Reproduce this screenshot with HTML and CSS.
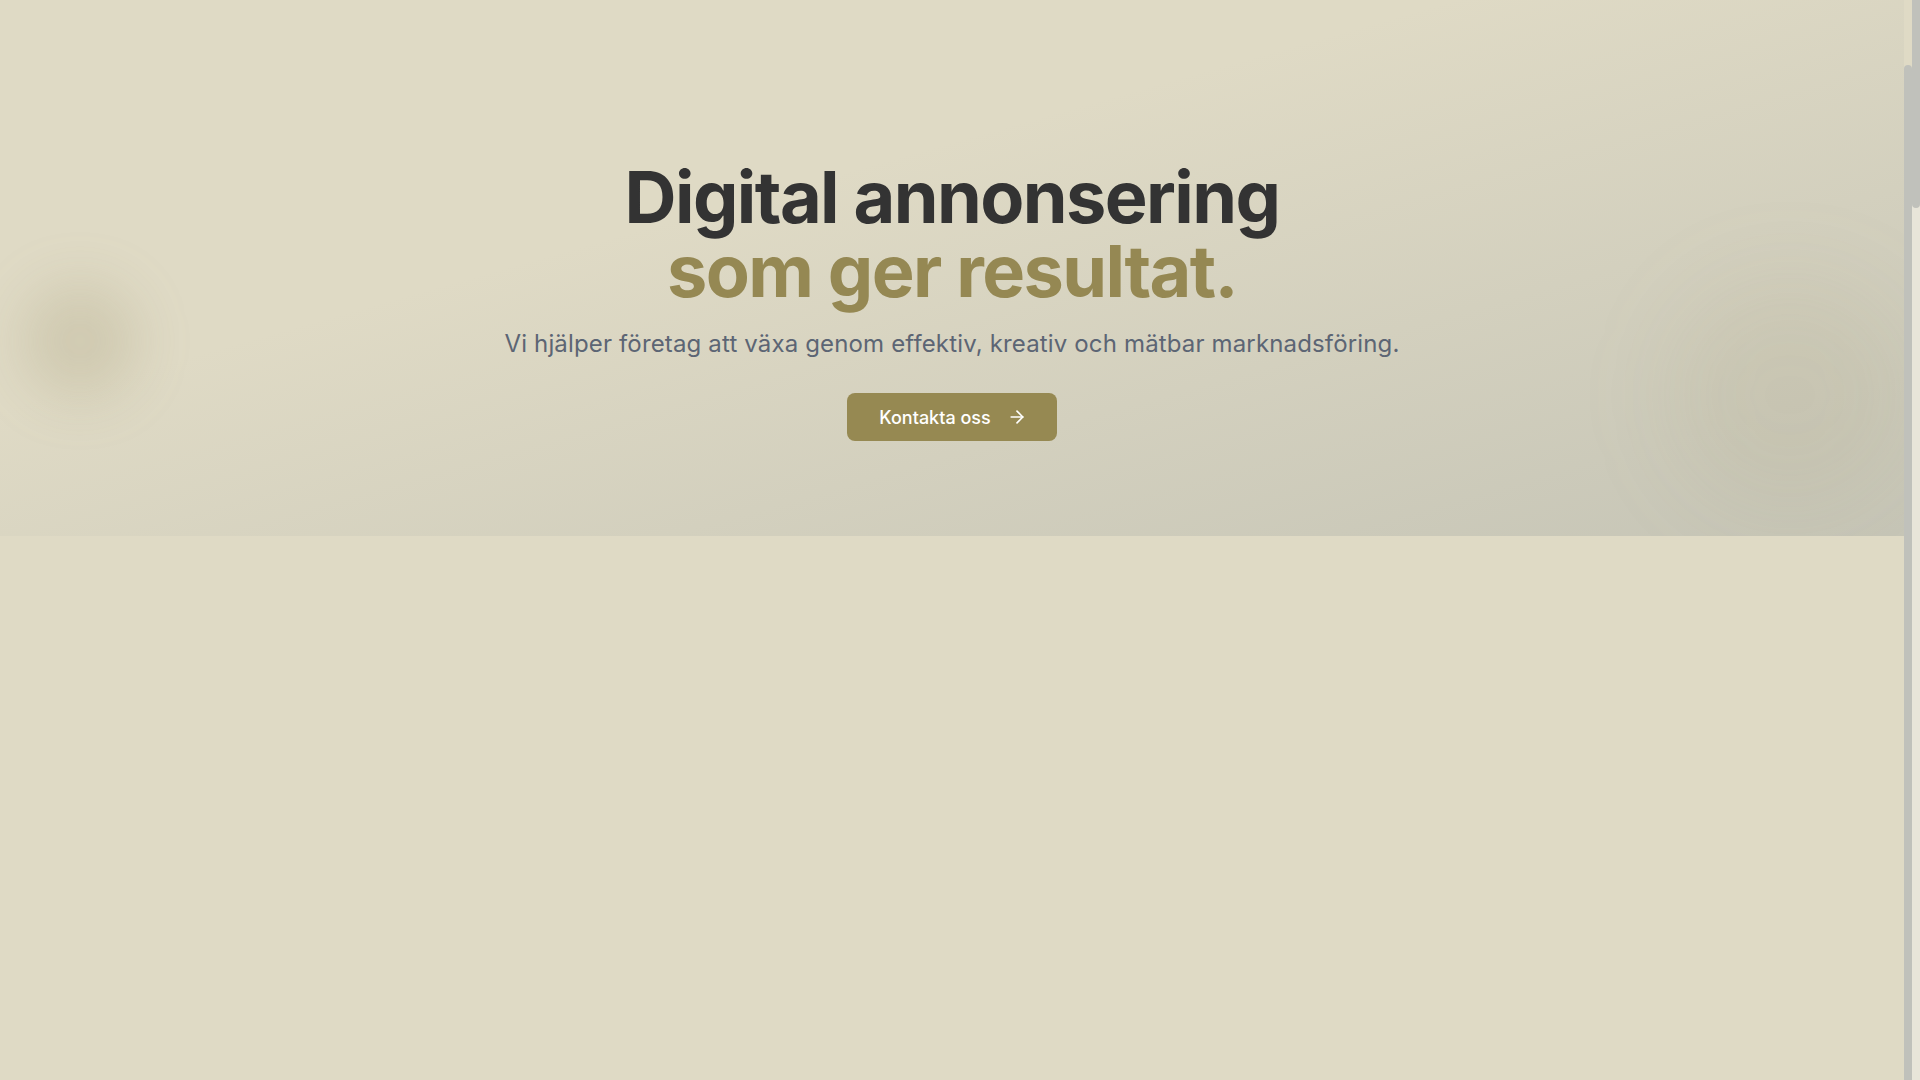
FILE: index.html
```html
<!DOCTYPE html>
<html lang="sv">
<head>
<meta charset="utf-8">
<title>Digital annonsering</title>
<link rel="stylesheet" href="styles.css">
</head>
<body>
  <div class="app">
    <section class="hero">
      <div class="blob blob-left"></div>
      <div class="blob blob-right"></div>
      <div class="hero-content">
        <h1 class="hero-title">
          <span class="hero-line">Digital annonsering</span>
          <span class="hero-line hero-accent">som ger resultat.</span>
        </h1>
        <p class="hero-lead">Vi hjälper företag att växa genom effektiv, kreativ och mätbar marknadsföring.</p>
        <a class="btn" href="#kontakt">
          <span>Kontakta oss</span>
          <svg class="btn-icon" viewBox="0 0 24 24" width="20" height="20" fill="none" stroke="currentColor" stroke-width="2" stroke-linecap="round" stroke-linejoin="round"><path d="M5 12h14"/><path d="m12 5 7 7-7 7"/></svg>
        </a>
      </div>
    </section>
    <main class="content"></main>
  </div>
  <div class="scrollbar scrollbar-inner"><div class="scrollbar-thumb scrollbar-thumb-inner"></div></div>
  <div class="scrollbar scrollbar-outer"><div class="scrollbar-thumb scrollbar-thumb-outer"></div></div>
</body>
</html>
```

FILE: styles.css
```css
html {
  background: #dfdac5;
}

body {
  margin: 0;
  height: 100vh;
  overflow: hidden;
  display: flex;
  font-family: Inter, "Noto Sans", sans-serif;
  background: #dfdac5;
}

.app {
  flex: 1;
  min-width: 0;
  display: flex;
  flex-direction: column;
}

.scrollbar {
  width: 8px;
  flex-shrink: 0;
  display: flex;
  flex-direction: column;
  box-sizing: border-box;
}
.scrollbar-inner {
  padding-top: 65px;
}
.scrollbar-outer {
  background: #e8e5d9;
}
.scrollbar-thumb {
  background: #c0c1bb;
  border-radius: 4px;
}
.scrollbar-thumb-inner {
  flex: 1;
  border-bottom-left-radius: 0;
  border-bottom-right-radius: 0;
}
.scrollbar-thumb-outer {
  height: 208px;
  border-top-left-radius: 0;
  border-top-right-radius: 0;
}

.hero {
  position: relative;
  overflow: hidden;
  height: 536px;
  flex-shrink: 0;
  box-sizing: border-box;
  padding: 160px 24px 95px;
  background: linear-gradient(to bottom right, rgba(160, 165, 160, 0) 38%, rgba(160, 165, 160, 0.4) 100%);
}

.blob {
  position: absolute;
  border-radius: 50%;
  pointer-events: none;
}
.blob-left {
  left: 22px;
  top: 283px;
  width: 116px;
  height: 116px;
  background: rgba(150, 140, 100, 0.2);
  filter: blur(26px);
}
.blob-right {
  left: 1670px;
  top: 280px;
  width: 240px;
  height: 230px;
  background: rgba(150, 140, 100, 0.09);
  filter: blur(45px);
}

.hero-content {
  position: relative;
  display: flex;
  flex-direction: column;
  align-items: center;
  text-align: center;
}

.hero-title {
  margin: 0 0 20px;
  font-size: 72px;
  line-height: 74px;
  font-weight: 700;
  letter-spacing: -0.022em;
  color: #333333;
}
.hero-line {
  display: block;
}
.hero-accent {
  color: #958853;
}

.hero-lead {
  margin: 0 0 33px;
  font-size: 24px;
  line-height: 32px;
  letter-spacing: 0.15px;
  color: #5c6574;
}

.btn {
  display: inline-flex;
  align-items: center;
  gap: 16px;
  height: 48px;
  box-sizing: border-box;
  padding: 0 30px 0 32px;
  border-radius: 8px;
  background: #968952;
  color: #ffffff;
  font-size: 18px;
  font-weight: 500;
  text-decoration: none;
}
.btn-icon {
  display: block;
}

.content {
  flex: 1;
}
```
